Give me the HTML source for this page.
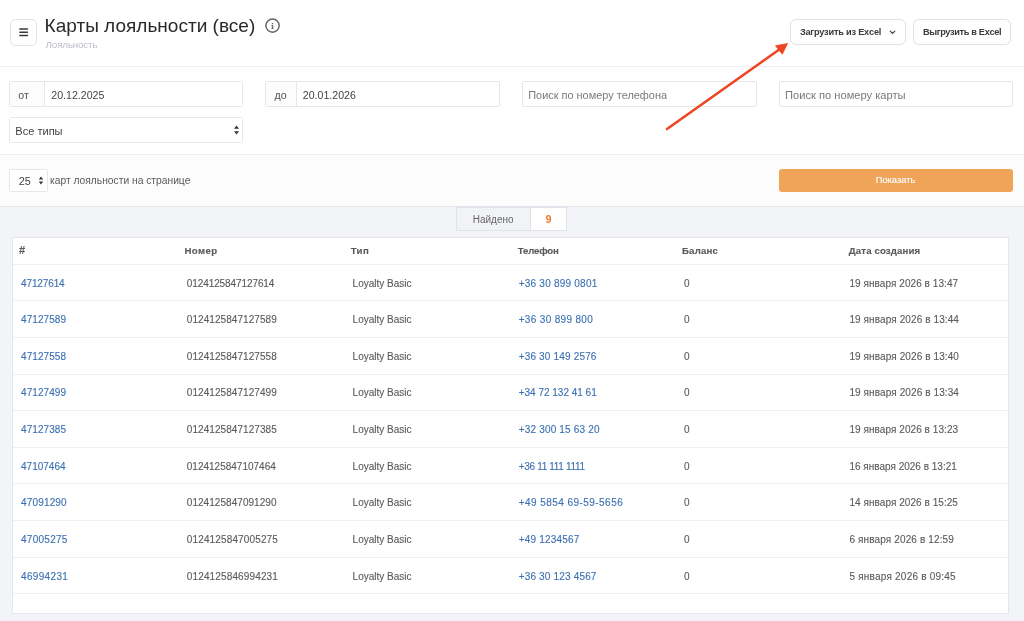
<!DOCTYPE html>
<html><head><meta charset="utf-8">
<style>
*{box-sizing:border-box;margin:0;padding:0}
html,body{width:1024px;height:621px;overflow:hidden;background:#fff;font-family:"Liberation Sans",sans-serif;color:#444}
.abs{position:absolute}
#top{position:absolute;left:0;top:0;width:1024px;height:67px;background:#fff;border-bottom:1px solid #eceef1}
.ham{left:10px;top:19px;width:27px;height:27px;border:1.6px solid #e0e3ea;border-radius:5.5px;background:#fff}
.ham i{position:absolute;left:8.5px;width:8.5px;height:1.6px;background:#2e2e2e}
h1{position:absolute;left:44.6px;top:14.6px;font-size:19.05px;line-height:22px;font-weight:normal;color:#2a2a2a;white-space:nowrap}
.crumb{left:45.6px;top:38.6px;font-size:9.9px;letter-spacing:-0.2px;line-height:11px;color:#babec7;white-space:nowrap}
.info{left:265px;top:18px;width:15px;height:15px;border:1.4px solid #555;border-radius:50%}
.btn{top:19px;height:26px;border:1.4px solid #dfe1ea;border-radius:6px;background:#fff;font-size:9.2px;font-weight:bold;color:#3a3a3a;white-space:nowrap;line-height:25.4px}
.inp{height:26px;border:1px solid #e5e7e8;border-radius:1.5px;background:#fff;font-size:10.6px;color:#444;line-height:26.6px;white-space:nowrap}
.pre{position:absolute;left:0;top:0;height:24px;background:#fcfcfc;border-right:1px solid #e5e7e8;text-align:center;color:#555}
#bar{position:absolute;left:0;top:154px;width:1024px;height:53px;background:#fcfcfc;border-top:1px solid #eef0f2;border-bottom:1px solid #e3e5ea}
#gray{position:absolute;left:0;top:207px;width:1024px;height:414px;background:#f3f4f8}
#card{position:absolute;left:12px;top:237px;width:997px;height:376.5px;background:#fff;border:1px solid #e4e6ec}
.ln{position:absolute;left:0;width:995px;height:1px;background:#edeff2}
.tr{position:absolute;left:0;width:994px;height:12px}
.c{position:absolute;top:0;font-size:10px;line-height:12px;color:#5b5b5b;white-space:nowrap;-webkit-text-stroke:0.12px currentColor}
.h{font-weight:bold;color:#5a5a5a;font-size:9.65px}
.lnk{color:#3c70b2}
#found{position:absolute;left:456px;top:207px;width:111px;height:24px;border:1px solid #dfe3ea;background:#f2f3f7}
#found .n{position:absolute;left:73px;top:0;width:36px;height:22px;background:#fff;border-left:1px solid #dfe3ea;color:#ee7a2f;font-weight:bold;font-size:10.8px;line-height:23.4px;text-align:center}
#found .t{position:absolute;left:15.7px;top:0;font-size:10px;line-height:23.4px;color:#666}
#wrap{position:absolute;left:0;top:0;width:1024px;height:621px;will-change:transform}
</style></head><body><div id="wrap">
<div id="top">
  <div class="abs ham"></div><svg class="abs" style="left:0;top:0" width="40" height="50"><path d="M19.9 29H27.4M19.9 32.25H27.4M19.9 35.5H27.4" stroke="#3a3a3a" stroke-width="1.6" stroke-linecap="round"/></svg>
  <h1>Карты лояльности (все)</h1>
  <div class="abs crumb">Лояльность</div>
  <svg class="abs" style="left:260px;top:13px" width="26" height="26" viewBox="260 13 26 26"><circle cx="272.55" cy="25.6" r="6.65" fill="none" stroke="#5f636a" stroke-width="1.45"/><rect x="271.8" y="22.95" width="1.45" height="1.3" fill="#666a72"/><path d="M271.3 25.0H273.2V28.4H273.85V29.05H271.3V28.4H271.8V25.65H271.3Z" fill="#666a72"/></svg>
  <div class="abs btn" style="left:790px;width:116px;padding-left:8.9px;letter-spacing:-0.2px">Загрузить из Excel<svg style="position:absolute;left:98.4px;top:10px" width="7" height="5" viewBox="0 0 7 5"><path d="M1.2 1.1 L3.5 3.4 L5.8 1.1" fill="none" stroke="#3a3a3a" stroke-width="1.2" stroke-linecap="round" stroke-linejoin="round"/></svg></div>
  <div class="abs btn" style="left:913px;width:98px;padding-left:8.9px;letter-spacing:-0.33px">Выгрузить в Excel</div>
</div>
<div class="abs inp" style="left:9px;top:81px;width:234px"><div class="pre" style="width:35.4px"><span style="position:absolute;left:8.3px">от</span></div><span style="position:absolute;left:41.3px">20.12.2025</span></div>
<div class="abs inp" style="left:265px;top:81px;width:235px"><div class="pre" style="width:31.4px"><span style="position:absolute;left:8.6px">до</span></div><span style="position:absolute;left:36.8px">20.01.2026</span></div>
<div class="abs inp" style="left:522px;top:81px;width:235px;color:#7a7a7a;font-size:10.95px"><span style="position:absolute;left:5.2px">Поиск по номеру телефона</span></div>
<div class="abs inp" style="left:779px;top:81px;width:234px;color:#7a7a7a;font-size:11.15px"><span style="position:absolute;left:5.0px">Поиск по номеру карты</span></div>
<div class="abs inp" style="left:9px;top:117px;width:234px;font-size:11.05px;line-height:26px"><span style="position:absolute;left:5.3px">Все типы</span>
  <svg style="position:absolute;left:223px;top:7px" width="7" height="10" viewBox="0 0 7 10"><path d="M3.5 0.5 L6 3.8 L1 3.8Z M3.5 9.5 L6 6.2 L1 6.2Z" fill="#333"/></svg></div>
<div id="bar">
  <div class="abs inp" style="left:9px;top:14.4px;width:38.9px;height:22.6px;line-height:22px;font-size:10.9px"><span style="position:absolute;left:8.8px">25</span>
    <svg style="position:absolute;left:28px;top:5.2px" width="6" height="9" viewBox="0 0 6 9"><path d="M3 0.5 L5.2 3.4 L0.8 3.4Z M3 8.5 L5.2 5.6 L0.8 5.6Z" fill="#333"/></svg></div>
  <span class="abs" style="left:50px;top:20px;font-size:10.27px;line-height:12px;color:#5a5a5a;white-space:nowrap">карт лояльности на странице</span>
  <div class="abs" style="left:779px;top:14px;width:234px;height:23px;background:#efa457;border-radius:3px;color:#fff;font-size:9.3px;line-height:23.6px;text-align:center;padding-right:1px;-webkit-text-stroke:0.15px #fff">Показать</div>
</div>
<div id="gray"></div>
<div id="found"><span class="t">Найдено</span><div class="n">9</div></div>
<div id="card">
<div class="tr" style="top:6.60px"><span class="c h" style="left:6.00px;letter-spacing:0px;font-size:11px;top:-0.5px">#</span><span class="c h" style="left:171.40px;letter-spacing:0.4px">Номер</span><span class="c h" style="left:337.70px;letter-spacing:0.4px">Тип</span><span class="c h" style="left:504.70px;letter-spacing:-0.15px">Телефон</span><span class="c h" style="left:669.00px;letter-spacing:0.2px">Баланс</span><span class="c h" style="left:835.80px;letter-spacing:0.14px">Дата создания</span></div>
<div class="ln" style="top:25.60px"></div>
<div class="ln" style="top:62.24px"></div>
<div class="ln" style="top:98.88px"></div>
<div class="ln" style="top:135.52px"></div>
<div class="ln" style="top:172.16px"></div>
<div class="ln" style="top:208.80px"></div>
<div class="ln" style="top:245.44px"></div>
<div class="ln" style="top:282.08px"></div>
<div class="ln" style="top:318.72px"></div>
<div class="ln" style="top:355.36px"></div>
<div class="tr" style="top:39.52px"><span class="c lnk" style="left:8.00px;letter-spacing:-0.121px">47127614</span><span class="c" style="left:173.80px;letter-spacing:-0.093px">0124125847127614</span><span class="c" style="left:339.60px">Loyalty Basic</span><span class="c lnk" style="left:505.70px;letter-spacing:0.229px">+36 30 899 0801</span><span class="c" style="left:671.00px">0</span><span class="c" style="left:836.40px;letter-spacing:0.064px">19 января 2026 в 13:47</span></div>
<div class="tr" style="top:76.16px"><span class="c lnk" style="left:8.00px;letter-spacing:0.079px">47127589</span><span class="c" style="left:173.80px;letter-spacing:0.067px">0124125847127589</span><span class="c" style="left:339.60px">Loyalty Basic</span><span class="c lnk" style="left:505.70px;letter-spacing:0.331px">+36 30 899 800</span><span class="c" style="left:671.00px">0</span><span class="c" style="left:836.40px;letter-spacing:0.102px">19 января 2026 в 13:44</span></div>
<div class="tr" style="top:112.80px"><span class="c lnk" style="left:8.00px;letter-spacing:0.079px">47127558</span><span class="c" style="left:173.80px;letter-spacing:0.067px">0124125847127558</span><span class="c" style="left:339.60px">Loyalty Basic</span><span class="c lnk" style="left:505.70px;letter-spacing:0.171px">+36 30 149 2576</span><span class="c" style="left:671.00px">0</span><span class="c" style="left:836.40px;letter-spacing:0.102px">19 января 2026 в 13:40</span></div>
<div class="tr" style="top:149.44px"><span class="c lnk" style="left:8.00px;letter-spacing:0.079px">47127499</span><span class="c" style="left:173.80px;letter-spacing:0.067px">0124125847127499</span><span class="c" style="left:339.60px">Loyalty Basic</span><span class="c lnk" style="left:505.70px;letter-spacing:-0.007px">+34 72 132 41 61</span><span class="c" style="left:671.00px">0</span><span class="c" style="left:836.40px;letter-spacing:0.102px">19 января 2026 в 13:34</span></div>
<div class="tr" style="top:186.08px"><span class="c lnk" style="left:8.00px;letter-spacing:0.079px">47127385</span><span class="c" style="left:173.80px;letter-spacing:0.067px">0124125847127385</span><span class="c" style="left:339.60px">Loyalty Basic</span><span class="c lnk" style="left:505.70px;letter-spacing:0.180px">+32 300 15 63 20</span><span class="c" style="left:671.00px">0</span><span class="c" style="left:836.40px;letter-spacing:0.064px">19 января 2026 в 13:23</span></div>
<div class="tr" style="top:222.72px"><span class="c lnk" style="left:8.00px;letter-spacing:0.007px">47107464</span><span class="c" style="left:173.80px">0124125847107464</span><span class="c" style="left:339.60px">Loyalty Basic</span><span class="c lnk" style="left:505.70px;letter-spacing:-0.321px">+36 11 111 1111</span><span class="c" style="left:671.00px">0</span><span class="c" style="left:836.40px;letter-spacing:0.002px">16 января 2026 в 13:21</span></div>
<div class="tr" style="top:259.36px"><span class="c lnk" style="left:8.00px;letter-spacing:0.164px">47091290</span><span class="c" style="left:173.80px;letter-spacing:0.047px">0124125847091290</span><span class="c" style="left:339.60px">Loyalty Basic</span><span class="c lnk" style="left:505.70px;letter-spacing:0.450px">+49 5854 69-59-5656</span><span class="c" style="left:671.00px">0</span><span class="c" style="left:836.40px;letter-spacing:0.055px">14 января 2026 в 15:25</span></div>
<div class="tr" style="top:296.00px"><span class="c lnk" style="left:8.00px;letter-spacing:0.264px">47005275</span><span class="c" style="left:173.80px;letter-spacing:0.140px">0124125847005275</span><span class="c" style="left:339.60px">Loyalty Basic</span><span class="c lnk" style="left:505.70px;letter-spacing:0.190px">+49 1234567</span><span class="c" style="left:671.00px">0</span><span class="c" style="left:836.40px;letter-spacing:0.133px">6 января 2026 в 12:59</span></div>
<div class="tr" style="top:332.64px"><span class="c lnk" style="left:8.00px;letter-spacing:0.336px">46994231</span><span class="c" style="left:173.80px;letter-spacing:0.140px">0124125846994231</span><span class="c" style="left:339.60px">Loyalty Basic</span><span class="c lnk" style="left:505.70px;letter-spacing:0.171px">+36 30 123 4567</span><span class="c" style="left:671.00px">0</span><span class="c" style="left:836.40px;letter-spacing:0.223px">5 января 2026 в 09:45</span></div></div>
<svg class="abs" style="left:0;top:0" width="1024" height="621" viewBox="0 0 1024 621">
<line x1="667" y1="129" x2="780" y2="49" stroke="#ee4623" stroke-width="2.6" stroke-linecap="round"/>
<path d="M787.5 43.5 L775.5 45.8 L782.3 54.2 Z" fill="#ee4623" stroke="#ee4623" stroke-width="0.8" stroke-linejoin="round"/>
</svg>
</div>
</body></html>
